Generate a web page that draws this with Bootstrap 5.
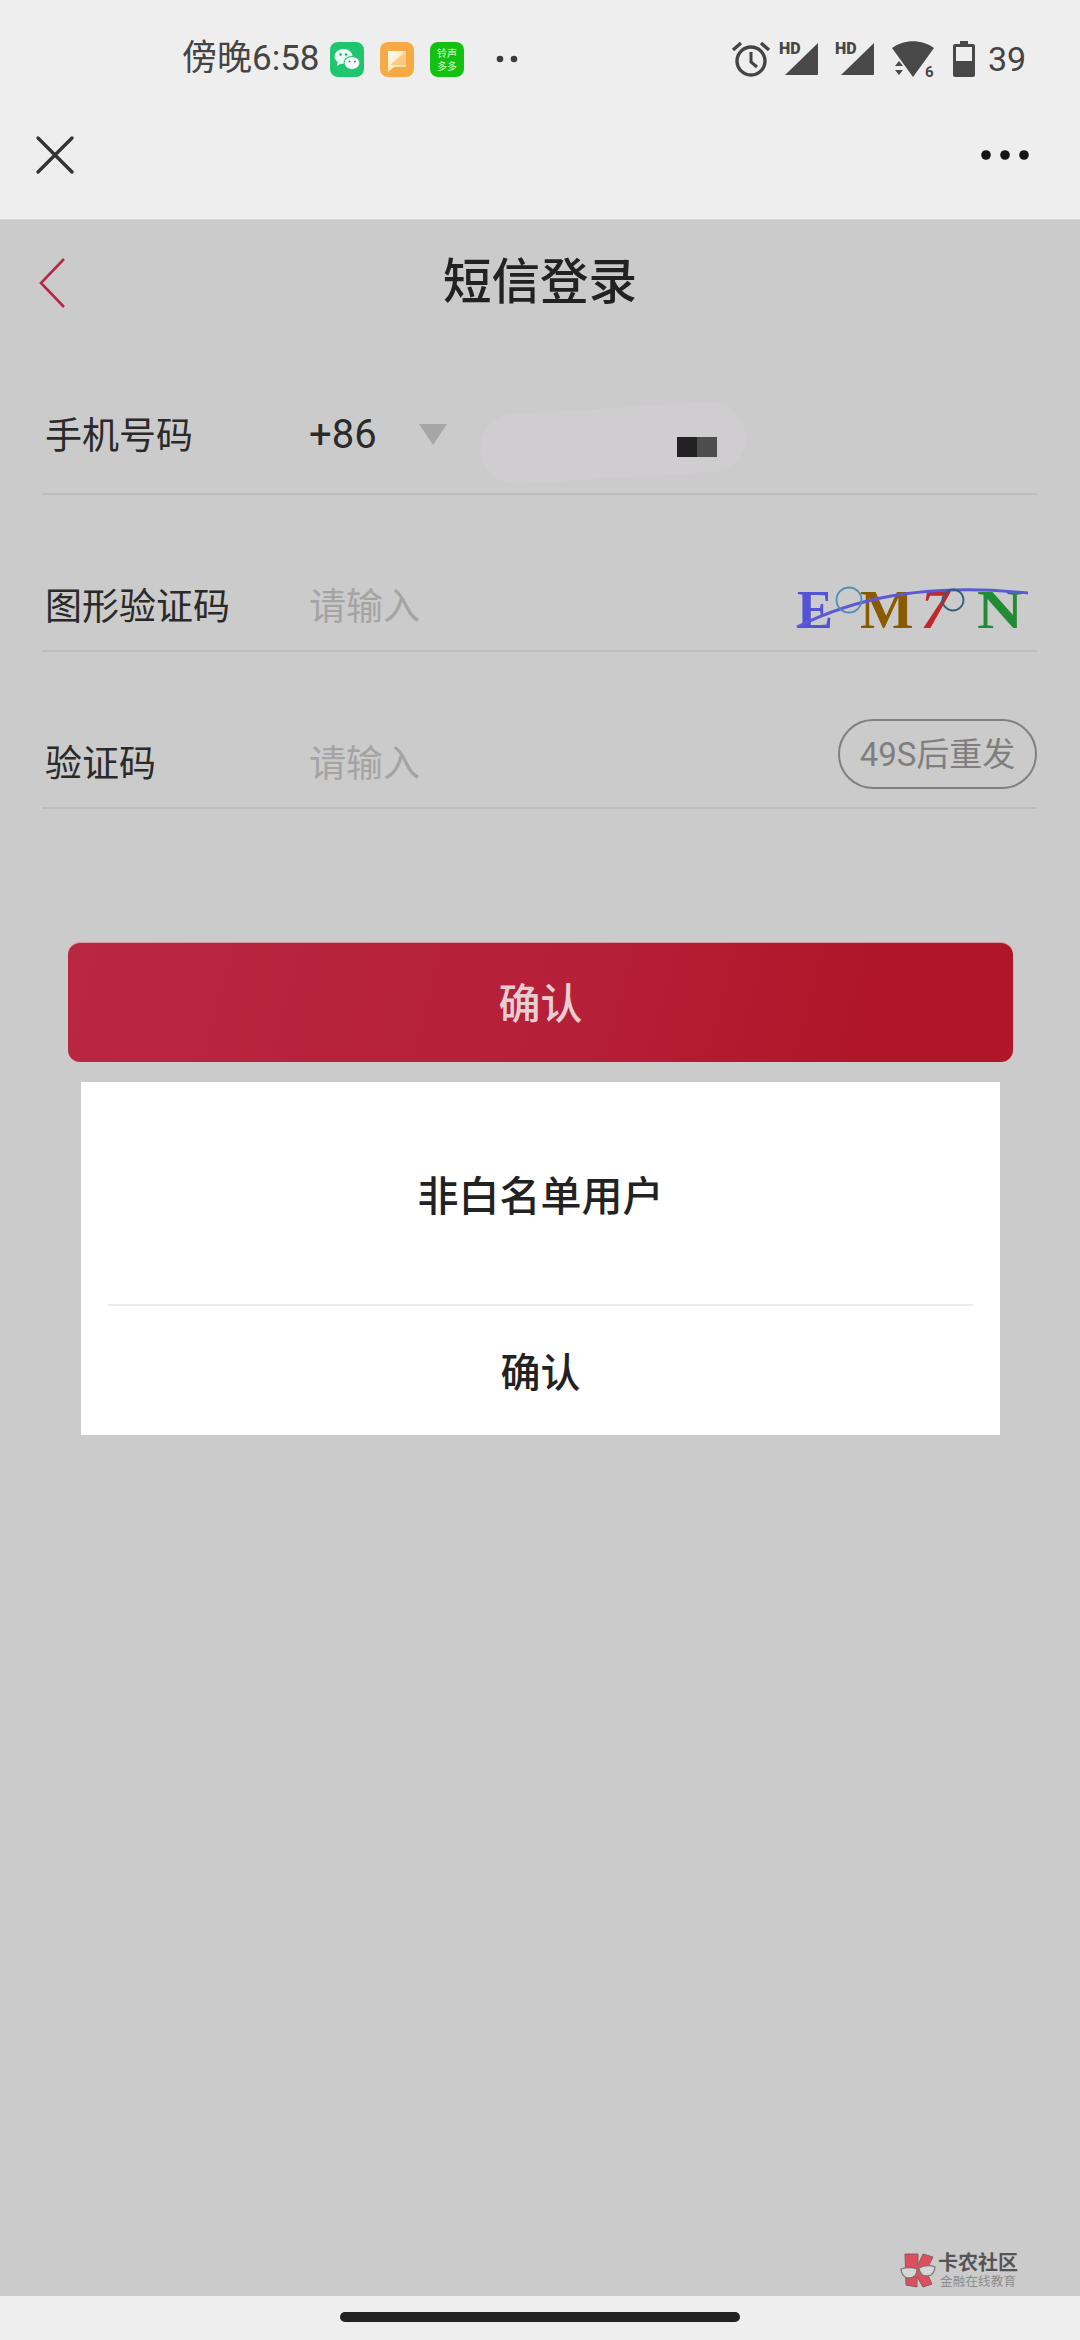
<!DOCTYPE html>
<html lang="zh-CN">
<head>
<meta charset="utf-8">
<title>短信登录</title>
<link href="https://cdn.jsdelivr.net/npm/bootstrap@5.3.0/dist/css/bootstrap.min.css" rel="stylesheet">
<style>
html,body{margin:0;height:2340px;overflow:hidden}
body{background:#cbcbcb;font-family:"Noto Sans","Noto Sans CJK SC",sans-serif;color:#222;position:relative}
svg{overflow:visible}
.app-top{background:#eee;height:220px;box-shadow:inset 0 -1px 0 #d6d6d6}
.status-row{height:118px;padding-left:182px;padding-right:56px;color:#444;font-size:35px;font-family:Roboto,"Noto Sans CJK SC",sans-serif}
.status-time{width:148px;white-space:nowrap}
.app-icon{width:34px;height:35px;margin-right:16px;display:block}
.status-num{font-size:34px;margin-left:13px;width:36px}
.tool-row{height:102px;padding:0 51px 28px 36px}
.page-title{height:155px;position:relative;font-size:48.5px;font-weight:500;line-height:1;padding-top:36px;color:#222}
.page-title svg{position:absolute;left:39px;top:38px}
.form-wrap{margin:0 43px 0 42px}
.f-row{border-bottom:2px solid #bdbdbd;height:157px;padding-top:65px;position:relative}
.f-row.first{height:120px;padding-top:0}
.f-label{width:267px;padding-left:3px;font-size:37px;line-height:1;color:#2a2a2a;white-space:nowrap;flex:0 0 auto;margin:0}
.f-input.form-control{background:transparent;border:0;box-shadow:none;padding:0;font-size:37px;line-height:1;color:#222;min-width:0;width:auto;border-radius:0}
.f-input.form-control::placeholder{color:#a4a4a4;opacity:1}
.cc{font-family:Roboto,sans-serif;font-size:40px;line-height:1;color:#2a2a2a;width:110px;padding-top:2px}
.tri{width:0;height:0;border-left:14px solid transparent;border-right:14px solid transparent;border-top:21px solid #a6a6a6}
.blob{position:absolute;left:438px;top:33px;width:266px;height:70px;border-radius:35px;background:#cfcdcf;transform:rotate(-3.5deg)}
.pix{position:absolute;left:635px;top:62px;display:flex;height:20px}
.pix i{display:block;width:20px;height:20px;background:#222}
.pix i+i{background:#4d4d4d}
.captcha{margin-right:6px;margin-top:6px;display:block}
.resend.btn{--bs-btn-padding-x:0;--bs-btn-padding-y:0;width:199px;height:70px;border:2px solid #808080;border-radius:35px;color:#7f7f7f;background:transparent;font-size:33px;line-height:1;margin-bottom:16px;font-family:Roboto,"Noto Sans CJK SC",sans-serif}
.primary-go.btn{display:block;margin:134px 67px 0 68px;width:945px;height:119px;background:linear-gradient(105deg,#ba2740 0%,#b51f37 55%,#b01528 85%);border:0;border-radius:12px;color:#e8cdd1;font-size:42px;font-weight:500;line-height:1;padding:0;box-shadow:0 -1px 0 #d79aa4}
.dlg{margin:20px 80px 0 81px;width:919px;height:353px;background:#fff;border-radius:0;border:0}
.dlg-msg{height:222px;font-size:41px;font-weight:500;color:#222;line-height:1;padding-top:4px}
.dlg-line{margin:0 27px;height:2px;background:#ececec}
.dlg-act{height:129px;font-size:40px;font-weight:500;color:#222;line-height:1;padding-top:2px}
.wmark{position:absolute;left:900px;top:2251px;width:125px;height:40px}
.wm-a{position:absolute;left:38px;top:2px;font-size:20px;line-height:1;font-weight:700;color:#555;white-space:nowrap}
.wm-b{position:absolute;left:40px;top:25px;font-size:12.5px;line-height:1;letter-spacing:.2px;color:#8c8c8c;white-space:nowrap}
.nav-strip{position:absolute;left:0;right:0;top:2296px;height:44px;background:#eee}
.home-pill{width:400px;height:10px;background:#222;border-radius:5px;margin-top:16px}
</style>
</head>
<body>
<div class="app-top">
  <div class="status-row d-flex align-items-center">
    <span class="status-time">傍晚6:58</span>
    <svg class="app-icon" viewBox="0 0 34 35"><rect width="34" height="35" rx="8" fill="#1fc66f"/><ellipse cx="13.5" cy="14.5" rx="9" ry="7.5" fill="#eafff2"/><path d="M8 19l-1 5 5-3z" fill="#eafff2"/><ellipse cx="22" cy="21" rx="8" ry="6.5" fill="#fff" stroke="#1fc66f" stroke-width="1.2"/><circle cx="10.5" cy="12.5" r="1.2" fill="#1fa35e"/><circle cx="16" cy="12.5" r="1.2" fill="#1fa35e"/><circle cx="19.5" cy="19.5" r="1" fill="#1fa35e"/><circle cx="25" cy="19.5" r="1" fill="#1fa35e"/></svg>
    <svg class="app-icon" viewBox="0 0 34 35"><defs><linearGradient id="og" x1="0" y1="0" x2="1" y2="1"><stop offset="0" stop-color="#fff"/><stop offset="1" stop-color="#ffd48a"/></linearGradient></defs><rect width="34" height="35" rx="8" fill="#f7aa44"/><path d="M8 9h18v16H14l-6 5z" fill="url(#og)"/><path d="M26 9v14H10z" fill="#fbbf6a" opacity=".7"/></svg>
    <svg class="app-icon" viewBox="0 0 34 35"><rect width="34" height="35" rx="8" fill="#12c112"/><text x="17" y="15" text-anchor="middle" font-size="10" fill="#cfffcf" font-family="Noto Sans CJK SC">铃声</text><text x="17" y="28" text-anchor="middle" font-size="10" fill="#cfffcf" font-family="Noto Sans CJK SC">多多</text></svg>
    <svg class="ms-3" width="24" height="8" viewBox="0 0 24 8"><circle cx="4" cy="4" r="3.3" fill="#3c3c3c"/><circle cx="18" cy="4" r="3.3" fill="#3c3c3c"/></svg>
    <div class="ms-auto d-flex align-items-center">
      <svg width="40" height="36" viewBox="0 0 40 36" fill="none" stroke="#444"><circle cx="20" cy="20" r="14" stroke-width="3.4"/><path d="M20 11v10l6 5" stroke-width="3"/><path d="M2 9l8-7M38 9l-8-7" stroke-width="3.4"/></svg>
      <svg class="ms-2" width="40" height="36" viewBox="0 0 40 36"><path d="M39 2v31a1 1 0 0 1-1 1H6z" fill="#484848"/><text x="0" y="13" font-size="16" font-weight="900" fill="#484848" font-family="Roboto">HD</text></svg>
      <svg class="ms-3" width="40" height="36" viewBox="0 0 40 36"><path d="M39 2v31a1 1 0 0 1-1 1H6z" fill="#484848"/><text x="0" y="13" font-size="16" font-weight="900" fill="#484848" font-family="Roboto">HD</text></svg>
      <svg class="ms-3" width="46" height="38" viewBox="0 0 46 38"><path d="M1 8C13-1 31-1 43 8L22 37z" fill="#484848"/><path d="M4 26l4-5 4 5zM4 30h8l-4 5z" fill="#484848"/><text x="34" y="37" font-size="15" font-weight="700" fill="#484848" font-family="Roboto">6</text></svg>
      <svg class="ms-3" width="22" height="36" viewBox="0 0 22 36"><path d="M7 0h8v3h5a2 2 0 0 1 2 2v29a2 2 0 0 1-2 2H2a2 2 0 0 1-2-2V5a2 2 0 0 1 2-2h5z" fill="#484848"/><rect x="3" y="6" width="16" height="14" fill="#eee"/></svg>
      <span class="status-num">39</span>
    </div>
  </div>
  <div class="tool-row d-flex align-items-center justify-content-between">
    <svg width="38" height="38" viewBox="0 0 38 38" stroke="#333" stroke-width="3.4" stroke-linecap="round"><path d="M2 2l34 34M36 2L2 36"/></svg>
    <svg width="48" height="10" viewBox="0 0 48 10" fill="#151515"><circle cx="5" cy="5" r="4.8"/><circle cx="24" cy="5" r="4.8"/><circle cx="43" cy="5" r="4.8"/></svg>
  </div>
</div>

<div class="page-title text-center">
  <svg width="27" height="50" viewBox="0 0 27 50" fill="none" stroke="#b4274a" stroke-width="2.6"><path d="M25 1L2 25l23 24"/></svg>
  短信登录
</div>

<form class="form-wrap">
  <div class="f-row first d-flex align-items-center">
    <label class="f-label">手机号码</label>
    <span class="cc">+86</span>
    <span class="tri"></span>
    <span class="blob"></span>
    <span class="pix"><i></i><i></i></span>
  </div>
  <div class="f-row d-flex align-items-center">
    <label class="f-label">图形验证码</label>
    <input class="form-control f-input flex-fill" placeholder="请输入">
    <svg class="captcha flex-shrink-0" width="240" height="56" viewBox="0 0 240 56">
      <g font-family="Liberation Serif" font-weight="700" font-size="54">
        <text x="6" y="48" fill="#5353d6">E</text>
        <text transform="translate(69 48) scale(1.05 1)" fill="#8a5a00">M</text>
        <text x="130" y="48" fill="#c0282e" font-size="56" font-style="italic">7</text>
        <text transform="translate(186 48) scale(1.18 1)" fill="#228b35">N</text>
      </g>
      <path d="M6 47C60 20 130 2 237 13" fill="none" stroke="#5a5ad8" stroke-width="2.8"/>
      <circle cx="58" cy="20" r="12.5" fill="none" stroke="#4d8fb5" stroke-width="1.8"/>
      <circle cx="162" cy="20" r="10.5" fill="none" stroke="#2f5f80" stroke-width="1.8"/>
    </svg>
  </div>
  <div class="f-row d-flex align-items-center">
    <label class="f-label">验证码</label>
    <input class="form-control f-input flex-fill" placeholder="请输入">
    <button type="button" class="btn resend flex-shrink-0">49S后重发</button>
  </div>
</form>

<button type="button" class="btn primary-go">确认</button>

<div class="card dlg">
  <div class="dlg-msg d-flex align-items-center justify-content-center">非白名单用户</div>
  <div class="dlg-line"></div>
  <div class="dlg-act d-flex align-items-center justify-content-center">确认</div>
</div>

<div class="wmark">
  <svg width="36" height="38" viewBox="0 0 36 38" class="d-block">
    <path d="M5 3L18 3L18 14L23 3L33 6L26 20L32 33L23 36L17 26L17 36L6 34z" fill="#dd4f5c" stroke="#8a5a60"/>
    <path d="M1 18Q9 15 17 18Q17 27 9 27Q2 27 1 18zM19 17Q27 13 35 16Q34 25 27 25Q20 25 19 17z" fill="#d6d6d6" stroke="#777" stroke-width="1.3"/>
  </svg>
  <span class="wm-a">卡农社区</span>
  <span class="wm-b">金融在线教育</span>
</div>

<div class="nav-strip d-flex justify-content-center">
  <div class="home-pill"></div>
</div>
<script src="https://cdn.jsdelivr.net/npm/bootstrap@5.3.0/dist/js/bootstrap.bundle.min.js"></script>
</body>
</html>
